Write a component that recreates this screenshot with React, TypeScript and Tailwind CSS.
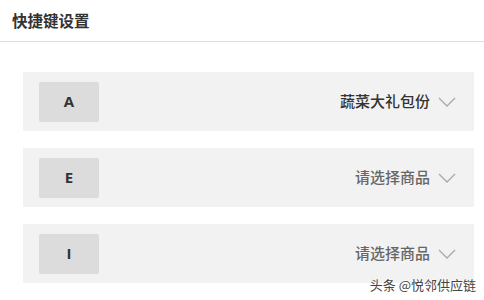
const rows = [
  { key: 'A', label: '蔬菜大礼包份', picked: true },
  { key: 'E', label: '请选择商品', picked: false },
  { key: 'I', label: '请选择商品', picked: false },
];

function Chevron() {
  return (
    <svg width="18" height="10" viewBox="0 0 18 10" fill="none" className="text-[#a8a8a8]">
      <polyline points="1,1 9,9 17,1" stroke="currentColor" strokeWidth="1.3" />
    </svg>
  );
}

export default function App() {
  return (
    <div
      className="relative w-[484px] h-[300px] overflow-hidden bg-white"
      style={{ fontFamily: '"Noto Sans CJK SC", "Noto Sans", sans-serif' }}
    >
      {/* Header */}
      <div className="h-[42px] border-b border-[#dddddd] flex items-center px-3">
        <h1 className="text-[15.5px] font-bold text-[#333333] leading-none">快捷键设置</h1>
      </div>

      {/* Shortcut rows */}
      <div className="flex flex-col gap-[17px] pt-[30px] pl-[23px] pr-[10px]">
        {rows.map(row => (
          <div key={row.key} className="h-[59px] bg-[#f2f2f2] flex items-center pl-4 pr-[18px]">
            <div className="w-[60px] h-[40px] bg-[#dcdcdc] rounded-[2px] flex items-center justify-center">
              <span
                className="text-[15px] font-bold text-[#333333]"
                style={{ fontFamily: '"Open Sans", "Liberation Sans", sans-serif' }}
              >
                {row.key}
              </span>
            </div>
            <div className="ml-auto flex items-center gap-[8px]">
              <span className={`text-[15px] font-medium ${row.picked ? 'text-[#333333]' : 'text-[#666666]'}`}>
                {row.label}
              </span>
              <Chevron />
            </div>
          </div>
        ))}
      </div>

      {/* Watermark */}
      <div
        className="absolute right-[8px] bottom-[6px] text-[13px] text-[#444444]"
        style={{ textShadow: '0 0 2px #fff, 0 0 2px #fff' }}
      >
        头条 @悦邻供应链
      </div>
    </div>
  );
}
